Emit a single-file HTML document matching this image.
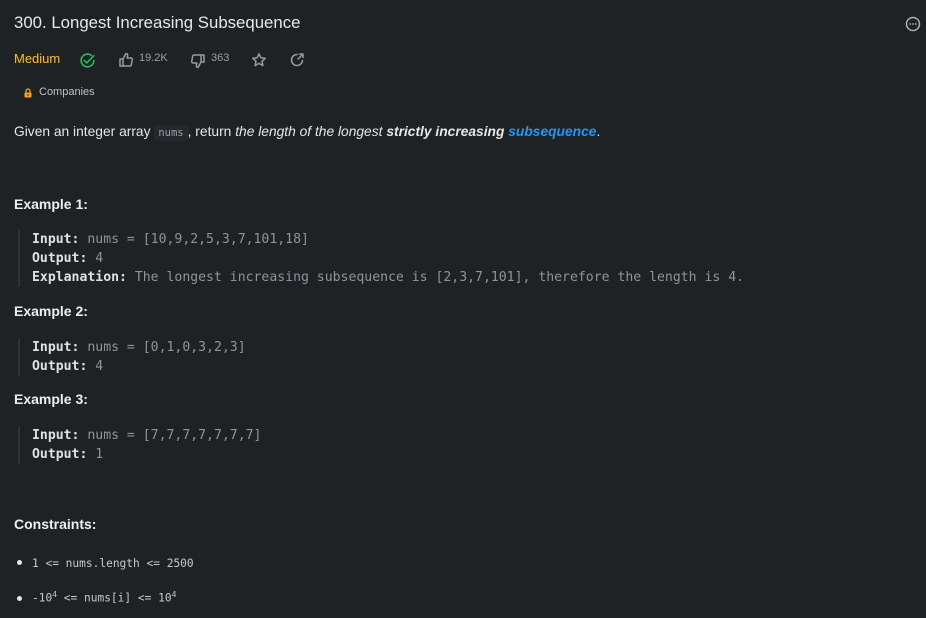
<!DOCTYPE html>
<html><head><meta charset="utf-8"><style>
body{margin:0;width:926px;height:618px;background:#1f2225;color:#eff1f6bf;font-family:"Liberation Sans",sans-serif;overflow:hidden;position:relative}
.a{position:absolute;white-space:nowrap}
.mono{font-family:"DejaVu Sans Mono","Liberation Mono",monospace;font-size:13.15px}
h1{margin:0;font-weight:400;font-size:16.8px;color:#e8e8e8}
.ex{font-weight:700;font-size:14px;color:#eeeeee}
.pre{border-left:2px solid #2e3236;padding-left:12px;line-height:19px;color:#8f9499}
.pre b{color:#e0e0e0}
.ic{stroke:#9c9a96;fill:none;stroke-width:1.5;stroke-linecap:round;stroke-linejoin:round}
.s{font-size:11px;color:#9c9c9c}
</style></head><body>
<h1 class="a" style="left:14px;top:13px">300. Longest Increasing Subsequence</h1>
<svg class="a" style="left:905px;top:16px" width="16" height="16" viewBox="0 0 16 16"><circle cx="8" cy="8" r="6.5" class="ic" style="stroke:#b0b0b0"/><circle cx="5.2" cy="8" r=".9" fill="#b0b0b0"/><circle cx="8" cy="8" r=".9" fill="#b0b0b0"/><circle cx="10.8" cy="8" r=".9" fill="#b0b0b0"/></svg>
<div class="a" style="left:14px;top:51px;font-size:13px;color:#ffc01e">Medium</div>
<svg class="a" style="left:79px;top:52px" width="17" height="17" viewBox="0 0 16 16"><path d="M14 8a6 6 0 1 1-2.5-4.9" class="ic" style="stroke:#2cbb5d"/><path d="M5 8l2.3 2.3L14 3.5" class="ic" style="stroke:#2cbb5d"/></svg>
<svg class="a" style="left:118px;top:52px" width="16" height="16" viewBox="0 0 16 16"><path d="M2 7h3v7H2zM5 7l3-5.5c1.2 0 1.8.8 1.6 2L9.2 6H13a1.3 1.3 0 0 1 1.3 1.5l-1 5.3A1.5 1.5 0 0 1 11.8 14H5" class="ic"/></svg>
<div class="a s" style="left:139px;top:52px">19.2K</div>
<svg class="a" style="left:190px;top:53px" width="16" height="16" viewBox="0 0 16 16"><g transform="rotate(180 8 8)"><path d="M2 7h3v7H2zM5 7l3-5.5c1.2 0 1.8.8 1.6 2L9.2 6H13a1.3 1.3 0 0 1 1.3 1.5l-1 5.3A1.5 1.5 0 0 1 11.8 14H5" class="ic"/></g></svg>
<div class="a s" style="left:211px;top:52px">363</div>
<svg class="a" style="left:251px;top:52px" width="16" height="16" viewBox="0 0 16 16"><path d="M8 1.8l1.9 4 4.3.5-3.2 3 .9 4.3L8 11.4l-3.9 2.2.9-4.3-3.2-3 4.3-.5z" class="ic"/></svg>
<svg class="a" style="left:289px;top:52px" width="16" height="16" viewBox="0 0 16 16"><path d="M13.5 8.5A5.5 5.5 0 1 1 8 2.5" class="ic"/><path d="M9 7l5-5M10.5 2H14v3.5" class="ic"/></svg>
<svg class="a" style="left:23px;top:88px" width="10" height="10" viewBox="0 0 10 10"><path d="M3 4.5V3a2 2 0 0 1 4 0v1.5" stroke="#ffa116" fill="none" stroke-width="1.3"/><rect x="1.5" y="4.5" width="7" height="5" rx="1" fill="#ffa116"/><circle cx="5" cy="7" r=".8" fill="#1f2225"/></svg>
<div class="a" style="left:39px;top:86px;font-size:11px;color:#c0c0c0">Companies</div>
<div class="a" style="left:14px;top:124px;font-size:13.8px;color:#e6e6e6">Given an integer array <span class="mono" style="font-size:10.5px;color:#9aa0a6;background:#25282c;padding:2px 4px;border-radius:3px">nums</span>, return <i>the length of the longest <b>strictly increasing</b> <b style="color:#2196f3">subsequence</b></i>.</div>
<div class="a ex" style="left:14px;top:196px">Example 1:</div>
<div class="a pre mono" style="left:18px;top:230px">
<b>Input:</b> nums = [10,9,2,5,3,7,101,18]<br><b>Output:</b> 4<br><b>Explanation:</b> The longest increasing subsequence is [2,3,7,101], therefore the length is 4.</div>
<div class="a ex" style="left:14px;top:303px">Example 2:</div>
<div class="a pre mono" style="left:18px;top:338px"><b>Input:</b> nums = [0,1,0,3,2,3]<br><b>Output:</b> 4</div>
<div class="a ex" style="left:14px;top:391px">Example 3:</div>
<div class="a pre mono" style="left:18px;top:426px"><b>Input:</b> nums = [7,7,7,7,7,7,7]<br><b>Output:</b> 1</div>
<div class="a ex" style="left:14px;top:516px">Constraints:</div>
<div class="a" style="left:17px;top:560px;width:5px;height:5px;border-radius:50%;background:#e6e6e6"></div>
<div class="a mono" style="left:32px;top:557px;font-size:11.2px;color:#c8c8c8">1 &lt;= nums.length &lt;= 2500</div>
<div class="a" style="left:17px;top:596px;width:5px;height:5px;border-radius:50%;background:#e6e6e6"></div>
<div class="a mono" style="left:32px;top:590px;font-size:11.2px;color:#c8c8c8">-10<sup style="font-size:8px">4</sup> &lt;= nums[i] &lt;= 10<sup style="font-size:8px">4</sup></div>
</body></html>
